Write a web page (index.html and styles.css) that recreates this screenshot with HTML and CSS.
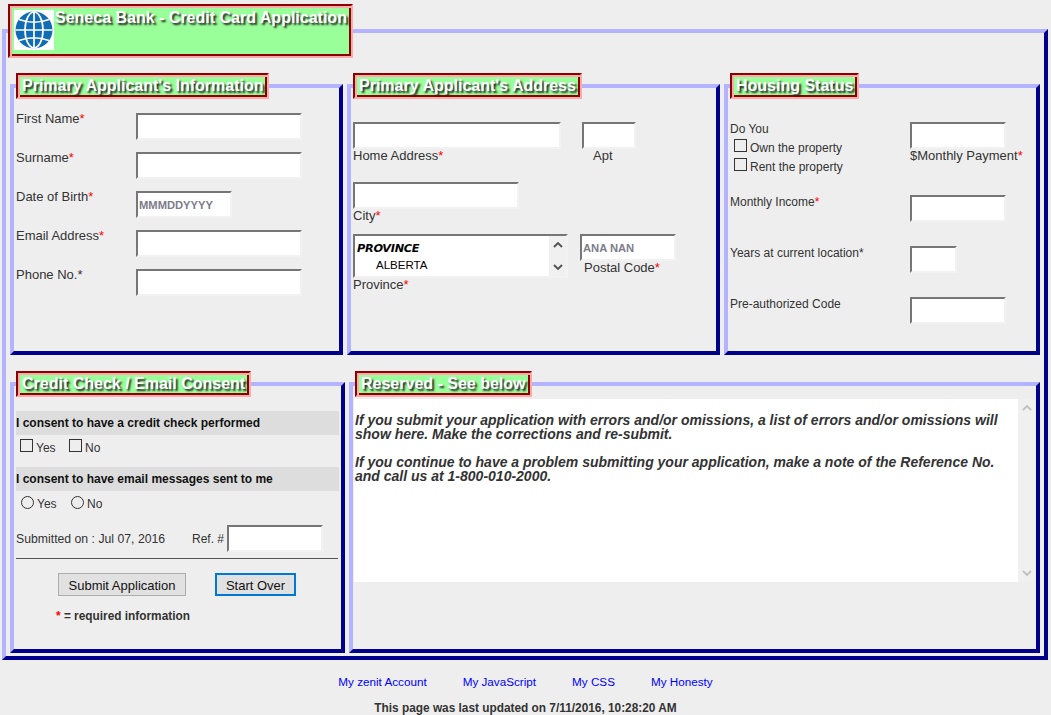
FILE: index.html
```html
<!DOCTYPE html>
<html lang="en">
<head>
<meta charset="utf-8">
<title>Seneca Bank - Credit Card Application</title>
<link rel="stylesheet" href="styles.css">
</head>
<body>
<form class="app">
  <div class="frame outer">
    <div class="legend title-legend">
      <svg class="logo" viewBox="0 0 40 40" width="40" height="40" aria-hidden="true">
        <rect width="40" height="40" fill="#fff"/>
        <circle cx="20" cy="20" r="18.5" fill="#0f6cb5"/>
        <g fill="none" stroke="#fff" stroke-width="1.7">
          <ellipse cx="20" cy="20" rx="9" ry="18"/>
          <path d="M20 1.5V38.5M1.5 20H38.5M5 9.5Q20 15 35 9.5M5 30.5Q20 25 35 30.5"/>
        </g>
      </svg>
      <span class="title-text">Seneca Bank - Credit Card Application</span>
    </div>
    <div class="rows">
      <div class="row">
        <section class="frame panel info">
          <h2 class="legend">Primary Applicant's Information</h2>
          <div class="pairs">
            <label class="pair"><span>First Name<i>*</i></span><input class="w166" type="text"></label>
            <label class="pair"><span>Surname<i>*</i></span><input class="w166" type="text"></label>
            <label class="pair"><span>Date of Birth<i>*</i></span><input class="w96 hint" type="text" placeholder="MMMDDYYYY"></label>
            <label class="pair"><span>Email Address<i>*</i></span><input class="w166" type="text"></label>
            <label class="pair"><span>Phone No.<i class="plain">*</i></span><input class="w166" type="text"></label>
          </div>
        </section>
        <section class="frame panel addr">
          <h2 class="legend">Primary Applicant's Address</h2>
          <div class="addr-line first">
            <label class="stack"><input class="w208" type="text"><span>Home Address<i>*</i></span></label>
            <label class="stack apt"><input class="w54" type="text"><span class="apt-label">Apt</span></label>
          </div>
          <label class="stack city"><input class="w166" type="text"><span>City<i>*</i></span></label>
          <div class="addr-line prov">
            <div class="stack">
              <div class="listbox">
                <div class="options"><b>PROVINCE</b><span>ALBERTA</span></div>
                <div class="arrows dark">
                  <svg viewBox="0 0 10 6" width="10" height="6"><path d="M1 5L5 1L9 5" fill="none" stroke="currentColor" stroke-width="1.8"/></svg>
                  <svg viewBox="0 0 10 6" width="10" height="6"><path d="M1 1L5 5L9 1" fill="none" stroke="currentColor" stroke-width="1.8"/></svg>
                </div>
              </div>
              <span>Province<i>*</i></span>
            </div>
            <label class="stack postal"><input class="w96 hint" type="text" placeholder="ANA NAN"><span class="postal-label">Postal Code<i>*</i></span></label>
          </div>
        </section>
        <section class="frame panel housing">
          <h2 class="legend">Housing Status</h2>
          <div class="house-top">
            <div class="do-you">
              <span>Do You</span>
              <label class="check-line"><span class="box"></span><span class="check-text">Own the property</span></label>
              <label class="check-line"><span class="box"></span><span class="check-text">Rent the property</span></label>
            </div>
            <label class="stack"><input class="w96" type="text"><span>$Monthly Payment<i>*</i></span></label>
          </div>
          <label class="house-row"><span>Monthly Income<i>*</i></span><input class="w96" type="text"></label>
          <label class="house-row"><span>Years at current location<i class="plain">*</i></span><input class="w47" type="text"></label>
          <label class="house-row"><span>Pre-authorized Code</span><input class="w96" type="text"></label>
        </section>
      </div>
      <div class="row">
        <section class="frame panel consent">
          <h2 class="legend">Credit Check / Email Consent</h2>
          <div class="bar">I consent to have a credit check performed</div>
          <div class="choices">
            <label class="choice"><span class="box"></span>Yes</label>
            <label class="choice"><span class="box"></span>No</label>
          </div>
          <div class="bar">I consent to have email messages sent to me</div>
          <div class="choices radios">
            <label class="choice"><span class="radio"></span>Yes</label>
            <label class="choice"><span class="radio"></span>No</label>
          </div>
          <div class="submitted">
            <span class="when">Submitted on : Jul 07, 2016</span>
            <label class="ref"><span>Ref. #</span><input class="w96" type="text"></label>
          </div>
          <hr class="rule">
          <div class="buttons">
            <button class="btn submit" type="button">Submit Application</button>
            <button class="btn over" type="button">Start Over</button>
          </div>
          <p class="required"><i>*</i> = required information</p>
        </section>
        <section class="frame panel reserved">
          <h2 class="legend">Reserved - See below</h2>
          <div class="message-wrap">
            <div class="message">
              <p>If you submit your application with errors and/or omissions, a list of errors and/or omissions will show here. Make the corrections and re-submit.</p>
              <p>If you continue to have a problem submitting your application, make a note of the Reference No. and call us at 1-800-010-2000.</p>
            </div>
            <div class="arrows pale">
              <svg viewBox="0 0 10 6" width="10" height="6"><path d="M1 5L5 1L9 5" fill="none" stroke="currentColor" stroke-width="1.8"/></svg>
              <svg viewBox="0 0 10 6" width="10" height="6"><path d="M1 1L5 5L9 1" fill="none" stroke="currentColor" stroke-width="1.8"/></svg>
            </div>
          </div>
        </section>
      </div>
    </div>
  </div>
</form>
<footer class="foot">
  <nav class="links">
    <a href="#">My zenit Account</a>
    <a href="#">My JavaScript</a>
    <a href="#">My CSS</a>
    <a href="#">My Honesty</a>
  </nav>
  <p class="updated">This page was last updated on 7/11/2016, 10:28:20 AM</p>
</footer>
</body>
</html>
```
FILE: styles.css
```css
* { box-sizing: border-box; }
html, body { margin: 0; height: 715px; overflow: hidden; }
body {
  background: #eeeeee;
  color: #333;
  font: 12px/14px "Liberation Sans", Arial, sans-serif;
}
i { color: #f00; font-style: normal; }
i.plain { color: #333; }
.app { padding: 29px 3px 0 2px; }
.frame {
  position: relative;
  border: 4px solid;
  border-color: #b3b3ff #00008b #00008b #b3b3ff;
}
.outer { width: 1046px; height: 631px; padding: 51px 4px 0; }
.legend {
  position: absolute;
  margin: 0;
  height: 26px;
  padding: 3px 4px 0;
  background: #99ff99;
  border: 2px solid;
  border-color: #8b0000 #ffaaaa #ffaaaa #8b0000;
  box-shadow: inset 2px 2px 0 #ffaaaa, inset -2px -2px 0 #8b0000;
  color: #fff;
  font: bold 16px/16px "Liberation Sans", Arial, sans-serif;
  text-shadow: 2px 2px 2px #222;
  white-space: nowrap;
  left: 2px;
  top: -15px;
}
.title-legend {
  display: flex;
  align-items: flex-start;
  gap: 1px;
  left: 2px;
  top: -29px;
  width: 345px;
  height: 54px;
  padding: 4px 0 0 4px;
}
.title-text { margin-top: -1px; font-size: 16px; line-height: 18px; }
.logo { flex: none; }
.rows { display: flex; flex-direction: column; gap: 27px; }
.row { display: flex; gap: 4px; height: 271px; }
.panel { flex: none; padding-left: 2px; }
.info { width: 333px; }
.addr { width: 373px; }
.housing { width: 316px; }
.consent { width: 335px; }
.reserved { width: 691px; }
input {
  display: block;
  margin: 0;
  height: 27px;
  padding: 1px 1px;
  background: #fff;
  border: 2px solid;
  border-color: #767676 #f2f2f2 #f2f2f2 #767676;
  font: bold 11.2px "Liberation Sans", Arial, sans-serif;
  color: #333;
}
input::placeholder { color: #7c7c8a; opacity: 1; }
.w208 { width: 208px; }
.w166 { width: 166px; }
.w96 { width: 96px; }
.w54 { width: 54px; }
.w47 { width: 47px; }

.pairs { display: flex; flex-direction: column; gap: 12px; padding-top: 25px; }
.pair { display: grid; grid-template-columns: 120px auto; justify-content: start; font-size: 13px; }
.pair > span { margin-top: -1px; }

.stack { display: block; font-size: 13px; }
.stack > span { display: block; margin-top: 0; }
.addr { padding-left: 2px; }
.addr-line { display: flex; align-items: flex-start; }
.first { padding-top: 34px; }
.apt { margin-left: 21px; }
.apt-label { padding-left: 11px; }
.city { margin-top: 19px; }
.prov { margin-top: 11px; }
.postal { margin-left: 12px; }
.postal-label { padding-left: 4px; }

.listbox {
  display: flex;
  justify-content: space-between;
  width: 215px;
  height: 44px;
  background: #fff;
  border: 2px solid;
  border-color: #767676 #f2f2f2 #f2f2f2 #767676;
}
.options { padding: 5px 2px 0; color: #000; font-size: 11.5px; line-height: 16px; }
.options b { display: block; font-style: italic; font-family: "DejaVu Sans", sans-serif; font-size: 11.3px; letter-spacing: -0.3px; }
.options span { display: block; padding-left: 19px; }
.arrows {
  flex: none;
  display: flex;
  flex-direction: column;
  justify-content: space-between;
  align-items: center;
  width: 17px;
  background: #f0f0f0;
  padding: 6px 0;
}
.arrows.dark { color: #505050; }
.arrows.pale { color: #c0c0c0; }

.house-top { display: flex; padding-top: 34px; }
.do-you { width: 180px; }
.check-line { display: flex; align-items: center; gap: 3px; padding-left: 4px; height: 19px; }
.do-you > span + .check-line { margin-top: 1px; }
.check-line .box { margin-top: -3px; }
.check-text { margin-top: 2px; }
.box {
  display: block;
  flex: none;
  width: 13px;
  height: 13px;
  background: #eee;
  border: 1px solid #333;
}
.radio {
  display: block;
  flex: none;
  width: 13px;
  height: 13px;
  background: #eee;
  border: 1px solid #333;
  border-radius: 50%;
}
.house-row { display: grid; grid-template-columns: 180px auto; justify-content: start; margin-top: 24px; }
.house-top + .house-row { margin-top: 20px; }
.house-row > span { margin-top: 0; }

.consent { padding: 25px 2px 0; }
.bar {
  width: 323px;
  height: 24px;
  background: #dddddd;
  color: #111;
  font-weight: bold;
  line-height: 24px;
}
.choices { display: flex; padding: 5px 0 0 4px; height: 32px; }
.choice { display: flex; align-items: flex-start; gap: 3px; width: 49px; line-height: 16px; }
.choice .box { margin-top: -1px; }
.radios { height: 34px; padding-left: 5px; }
.radios .choice { width: 50px; }
.submitted { display: flex; align-items: center; justify-content: space-between; width: 307px; height: 27px; }
.when { font-size: 12.25px; }
.ref { display: flex; align-items: center; gap: 3px; }
.rule { width: 322px; height: 1px; margin: 6px 0 0; border: 0; background: #555; }
.buttons { display: flex; gap: 29px; padding: 14px 0 0 42px; }
.btn {
  height: 23px;
  padding: 1px 0 0;
  background: #e1e1e1;
  color: #111;
  font: 13px "Liberation Sans", Arial, sans-serif;
}
.submit { width: 128px; border: 1px solid #adadad; }
.over { width: 81px; border: 2px solid #0078d7; }
.required { margin: 13px 0 0 40px; font-weight: bold; font-size: 11.85px; }

.reserved { padding: 13px 0 0 1px; }
.message-wrap { display: flex; width: 681px; height: 183px; }
.message {
  flex: none;
  width: 664px;
  padding: 14px 20px 0 1px;
  background: #fff;
  font: italic bold 14px/14px "Liberation Sans", Arial, sans-serif;
}
.message p { margin: 0 0 14px; }

.foot { padding-top: 15px; text-align: center; font-size: 11.7px; }
.links { display: flex; justify-content: center; gap: 36px; }
.links a { color: #00f; text-decoration: none; }
.updated { margin: 12px 0 0; font-weight: bold; font-size: 11.85px; }
```
